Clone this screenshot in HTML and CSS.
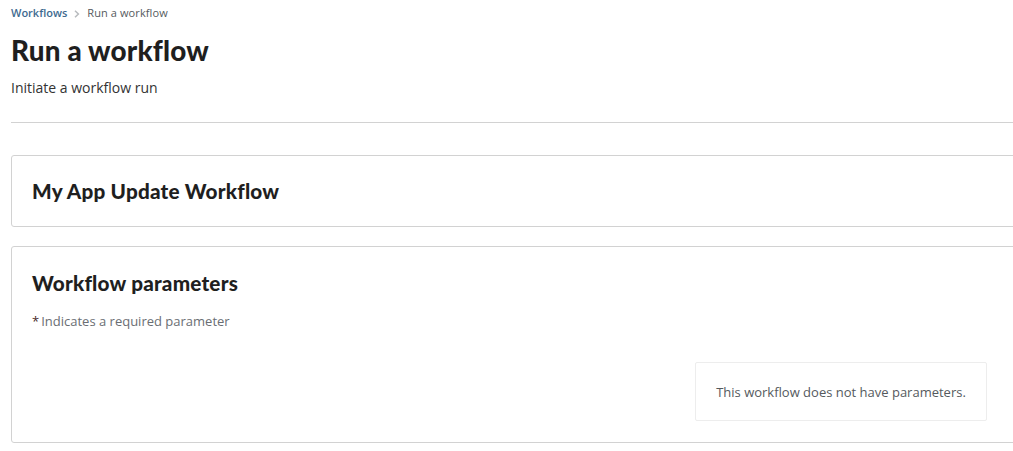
FILE: index.html
```html
<!DOCTYPE html>
<html>
<head>
<meta charset="utf-8">
<link rel="stylesheet" href="styles.css">
</head>
<body>
<div class="page">
  <nav class="breadcrumb">
    <a class="crumb-link">Workflows</a>
    <svg class="chev" width="6" height="8" viewBox="0 0 6 8"><path d="M1 0.8 L4.4 4 L1 7.2" fill="none" stroke="#b8bbbe" stroke-width="1.5"/></svg>
    <span class="crumb-current">Run a workflow</span>
  </nav>
  <h1 class="title">Run a workflow</h1>
  <p class="subtitle">Initiate a workflow run</p>
  <hr class="divider">
  <section class="card card-name">
    <h2 class="card-title">My App Update Workflow</h2>
  </section>
  <section class="card card-params">
    <h2 class="card-title">Workflow parameters</h2>
    <p class="required"><span class="star">*</span>Indicates a required parameter</p>
    <div class="empty-row">
      <div class="empty-box">This workflow does not have parameters.</div>
    </div>
  </section>
</div>
</body>
</html>
```
FILE: styles.css
```css
html, body {
  margin: 0;
  padding: 0;
  background: #ffffff;
  overflow: hidden;
}
body {
  font-family: "Open Sans", "Liberation Sans", sans-serif;
  color: #151515;
}
.page {
  width: 1010px;
  padding: 5px 0 0 11px;
}
.breadcrumb {
  display: flex;
  align-items: center;
  gap: 7px;
  font-size: 11px;
  line-height: 16px;
  height: 16px;
}
.crumb-link {
  color: #3e6a8f;
  font-weight: 600;
}
.chev {
  margin-top: 1px;
}
.crumb-current {
  color: #555a5e;
  margin-left: 0;
  letter-spacing: 0.1px;
}
.title {
  font-family: "Lato", "Liberation Sans", sans-serif;
  font-weight: 900;
  font-size: 27.8px;
  line-height: 36px;
  margin: 12px 0 0 0;
  color: #1f1f1f;
  letter-spacing: 0.2px;
}
.subtitle {
  font-size: 14px;
  line-height: 20px;
  margin: 9px 0 0 0;
  color: #333333;
}
.divider {
  border: 0;
  border-top: 1px solid #d2d2d2;
  margin: 24px 0 0 0;
  width: 1010px;
}
.card {
  border: 1px solid #d2d2d2;
  border-radius: 3px;
  box-sizing: border-box;
  width: 1010px;
  padding: 0 20px;
}
.card-name {
  margin-top: 32px;
  height: 72px;
  display: flex;
  align-items: center;
}
.card-title {
  font-family: "Lato", "Liberation Sans", sans-serif;
  font-weight: 900;
  font-size: 20.7px;
  line-height: 28px;
  margin: 0;
  color: #1f1f1f;
  letter-spacing: 0.2px;
}
.card-params {
  margin-top: 19px;
  height: 197px;
  padding-top: 22px;
}
.required {
  margin: 15px 0 0 0;
  font-size: 13px;
  line-height: 18px;
  color: #6a6e73;
}
.star {
  color: #4a2a2a;
  margin-right: 2px;
}
.empty-row {
  display: flex;
  justify-content: flex-end;
  margin-top: 32px;
  padding-right: 13px;
}
.empty-box {
  width: 292px;
  height: 59px;
  box-sizing: border-box;
  border: 1px solid #ededed;
  border-radius: 2px;
  display: flex;
  align-items: center;
  justify-content: center;
  font-size: 13px;
  color: #555a5e;
}
```
